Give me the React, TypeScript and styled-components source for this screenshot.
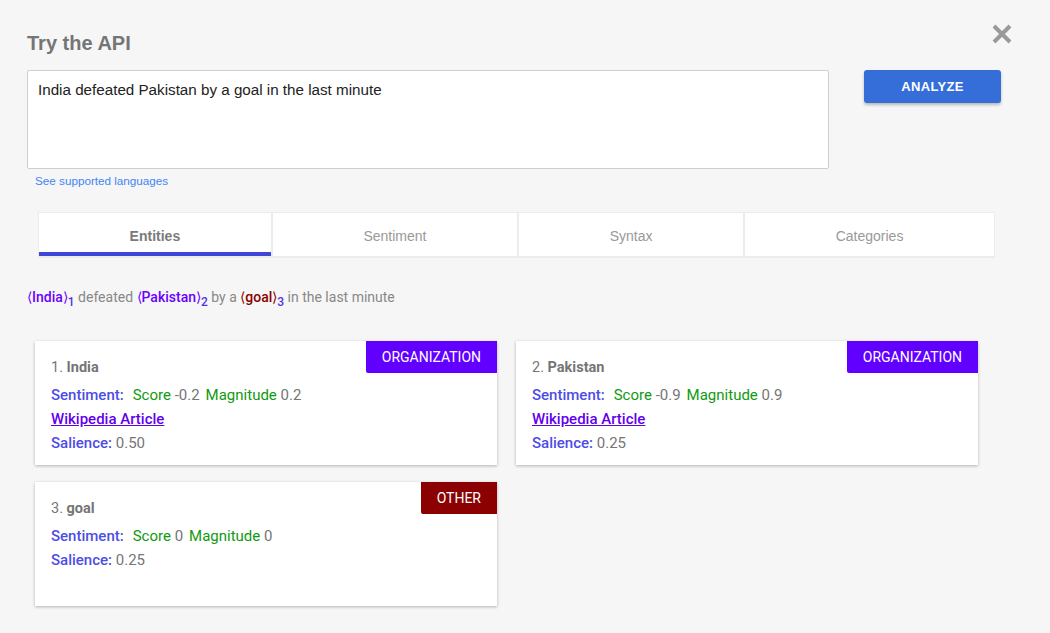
import React from "react";
import styled, { createGlobalStyle } from "styled-components";

const GlobalStyle = createGlobalStyle`
  html, body {
    margin: 0;
    padding: 0;
    background: #f6f6f6;
  }
  body {
    font-family: "Liberation Sans", Arial, sans-serif;
  }
`;

const Page = styled.div`
  position: relative;
  padding: 32px 0 24px 27px;
  box-sizing: border-box;
  width: 1050px;
`;

const Title = styled.h2`
  margin: 0 0 15px;
  font-size: 20px;
  line-height: 23px;
  font-weight: bold;
  color: #757575;
`;

const CloseButton = styled.button`
  position: absolute;
  top: 24px;
  right: 38px;
  width: 20px;
  height: 20px;
  padding: 0;
  border: 0;
  background: none;
  cursor: pointer;
  display: flex;
`;

const InputRow = styled.div`
  display: flex;
  align-items: flex-start;
  gap: 35px;
`;

const InputColumn = styled.div`
  display: flex;
  flex-direction: column;
`;

const TextBox = styled.textarea`
  width: 802px;
  height: 99px;
  box-sizing: border-box;
  margin: 0;
  padding: 10px;
  border: 1px solid #cfcfcf;
  border-radius: 2px;
  background: #fff;
  font-family: "Liberation Sans", Arial, sans-serif;
  font-size: 15.2px;
  line-height: 17px;
  color: #222;
  resize: none;
  outline: none;
`;

const LangLink = styled.a`
  margin: 5px 0 0 8px;
  font-size: 11.7px;
  line-height: 14px;
  color: #4285f4;
  text-decoration: none;
`;

const AnalyzeButton = styled.button`
  width: 137px;
  height: 33px;
  padding-top: 1px;
  border: 0;
  border-radius: 3px;
  background: #356ed8;
  color: #fff;
  font-family: "Liberation Sans", Arial, sans-serif;
  font-weight: bold;
  font-size: 13px;
  letter-spacing: 0.3px;
  box-shadow: 0 2px 3px rgba(0, 0, 0, 0.25);
  cursor: pointer;
`;

const Tabs = styled.div`
  display: flex;
  gap: 2px;
  width: 957px;
  margin: 24px 0 0 11px;
  padding: 1px 1px 2px;
  box-sizing: border-box;
  background: #ececec;
`;

const Tab = styled.div<{ $active?: boolean }>`
  flex: 1 1 auto;
  height: 43px;
  box-sizing: border-box;
  display: flex;
  align-items: center;
  justify-content: center;
  background: #fff;
  font-size: 14px;
  color: ${(p) => (p.$active ? "#7a7a7a" : "#999")};
  font-weight: ${(p) => (p.$active ? "bold" : "normal")};
  border-bottom: 4px solid ${(p) => (p.$active ? "#4047d8" : "#fff")};
  padding-top: 6px;
`;

const Sentence = styled.p`
  margin: 30px 0 0;
  font-family: Roboto, "Noto Sans", sans-serif;
  font-size: 14px;
  line-height: 18px;
  color: #888;
`;

const Mention = styled.span<{ $color: string }>`
  color: ${(p) => p.$color};
  font-weight: 500;
`;

const Index = styled.sub`
  font-size: 12px;
  color: #4f32e6;
  font-weight: 500;
  line-height: 0;
`;

const Cards = styled.div`
  display: grid;
  grid-template-columns: 462px 462px;
  column-gap: 19px;
  row-gap: 17px;
  margin: 35px 0 0 8px;
`;

const Card = styled.div`
  position: relative;
  min-height: 124px;
  box-sizing: border-box;
  padding: 15px 16px 8px;
  background: #fff;
  box-shadow: 0 1px 3px rgba(0, 0, 0, 0.28);
  font-family: Roboto, "Noto Sans", sans-serif;
  font-size: 15px;
  color: #757575;
`;

const Badge = styled.span<{ $bg: string }>`
  position: absolute;
  top: 0;
  right: 0;
  height: 32px;
  padding: 0 16px;
  display: flex;
  align-items: center;
  border-radius: 0 0 0 2px;
  background: ${(p) => p.$bg};
  color: #fff;
  font-size: 14px;
`;

const EntityName = styled.div`
  line-height: 24px;
  margin-bottom: 3px;
  font-size: 14.5px;

  b {
    font-weight: 700;
  }
`;

const Line = styled.div`
  line-height: 24px;
`;

const Label = styled.span`
  color: #4d4de6;
  font-weight: 500;
  margin-right: 9px;
`;

const Metric = styled.span`
  color: #0f9a0f;
`;

const Value = styled.span`
  color: #757575;
  margin-right: 6px;
`;

const WikiLink = styled.a`
  color: #6200ee;
  font-weight: 500;
  text-decoration: underline;
`;

const SalienceLabel = styled.span`
  color: #4d4de6;
  font-weight: 500;
`;

type Entity = {
  name: string;
  type: string;
  color: string;
  score: string;
  magnitude: string;
  salience: string;
  wiki?: boolean;
};

const entities: Entity[] = [
  { name: "India", type: "ORGANIZATION", color: "#6200ff", score: "-0.2", magnitude: "0.2", salience: "0.50", wiki: true },
  { name: "Pakistan", type: "ORGANIZATION", color: "#6200ff", score: "-0.9", magnitude: "0.9", salience: "0.25", wiki: true },
  { name: "goal", type: "OTHER", color: "#8b0000", score: "0", magnitude: "0", salience: "0.25" },
];

const CloseIcon = () => (
  <svg width="20" height="20" viewBox="0 0 20 20">
    <path d="M2 2 L18 18 M18 2 L2 18" stroke="#9a9a9a" strokeWidth="4" />
  </svg>
);

export default function App() {
  return (
    <>
      <GlobalStyle />
      <Page>
        <Title>Try the API</Title>
        <CloseButton aria-label="Close">
          <CloseIcon />
        </CloseButton>
        <InputRow>
          <InputColumn>
            <TextBox defaultValue="India defeated Pakistan by a goal in the last minute" />
            <LangLink href="#">See supported languages</LangLink>
          </InputColumn>
          <AnalyzeButton>ANALYZE</AnalyzeButton>
        </InputRow>

        <Tabs>
          <Tab $active>Entities</Tab>
          <Tab>Sentiment</Tab>
          <Tab>Syntax</Tab>
          <Tab>Categories</Tab>
        </Tabs>

        <Sentence>
          <Mention $color="#6a00ff">⟨India⟩</Mention>
          <Index>1</Index> defeated <Mention $color="#6a00ff">⟨Pakistan⟩</Mention>
          <Index>2</Index> by a <Mention $color="#8b0000">⟨goal⟩</Mention>
          <Index>3</Index> in the last minute
        </Sentence>

        <Cards>
          {entities.map((e, i) => (
            <Card key={e.name}>
              <Badge $bg={e.color}>{e.type}</Badge>
              <EntityName>
                {i + 1}. <b>{e.name}</b>
              </EntityName>
              <Line>
                <Label>Sentiment:</Label>
                <Metric>Score</Metric> <Value>{e.score}</Value>
                <Metric>Magnitude</Metric> <Value>{e.magnitude}</Value>
              </Line>
              {e.wiki && (
                <Line>
                  <WikiLink href="#">Wikipedia Article</WikiLink>
                </Line>
              )}
              <Line>
                <SalienceLabel>Salience:</SalienceLabel> {e.salience}
              </Line>
            </Card>
          ))}
        </Cards>
      </Page>
    </>
  );
}
